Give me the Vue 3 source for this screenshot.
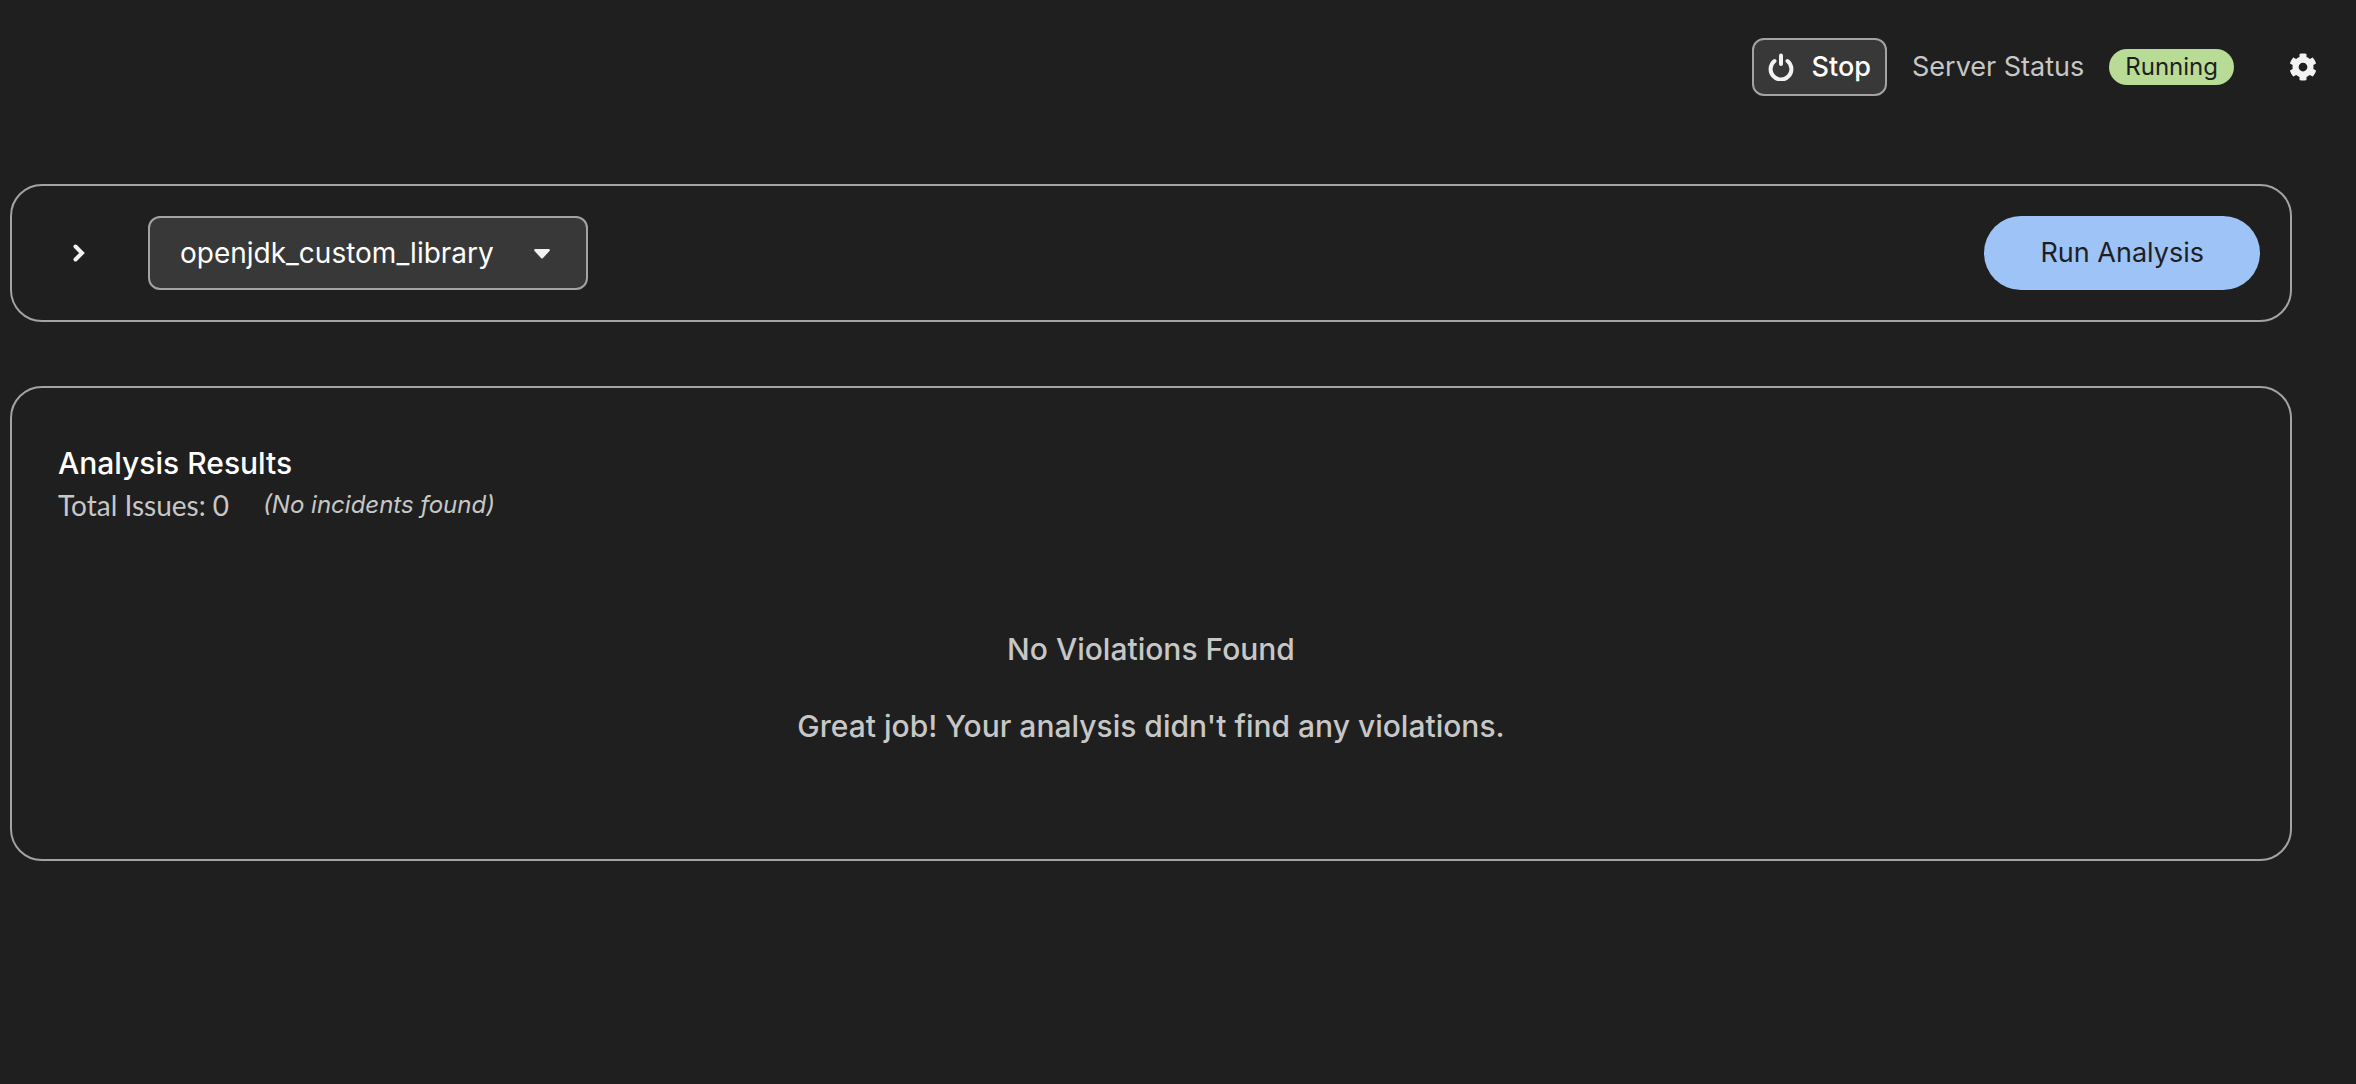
<script setup>
import { ref } from 'vue'

const profile = ref('openjdk_custom_library')
const profiles = ['openjdk_custom_library']
</script>

<template>
  <div class="page">
    <header class="toolbar">
      <button type="button" class="stop">
        <svg class="power" viewBox="0 0 26 28" aria-hidden="true">
          <path d="M6.500 8A10.400 10.400 0 1 0 19.500 8" />
          <path d="M13 2.500v8.500" />
        </svg>
        <span>Stop</span>
      </button>
      <span class="status-label">Server Status</span>
      <span class="badge">Running</span>
      <button type="button" class="icon-button settings" aria-label="Settings">
        <svg class="gear" viewBox="0 0 512 512" aria-hidden="true">
          <path d="M487.400 315.700l-42.600-24.600c4.300-23.200 4.300-47 0-70.200l42.600-24.600c4.900-2.800 7.100-8.600 5.500-14-11.100-35.600-30-67.800-54.700-94.600-3.800-4.100-10-5.100-14.800-2.300L380.800 110c-17.900-15.400-38.500-27.300-60.800-35.100V25.800c0-5.600-3.900-10.500-9.400-11.700-36.700-8.200-74.300-7.800-109.200 0-5.500 1.200-9.400 6.100-9.400 11.700V75c-22.200 7.900-42.800 19.800-60.800 35.100L88.700 85.500c-4.900-2.800-11-1.900-14.800 2.300-24.700 26.700-43.600 58.900-54.700 94.600-1.700 5.400.6 11.200 5.500 14L67.300 221c-4.300 23.200-4.300 47 0 70.200l-42.600 24.600c-4.900 2.800-7.100 8.600-5.500 14 11.100 35.600 30 67.800 54.700 94.600 3.800 4.100 10 5.100 14.800 2.300l42.600-24.600c17.900 15.400 38.500 27.300 60.800 35.100v49.200c0 5.600 3.900 10.500 9.400 11.700 36.700 8.200 74.300 7.800 109.200 0 5.500-1.200 9.400-6.100 9.400-11.700v-49.200c22.200-7.900 42.800-19.800 60.800-35.100l42.600 24.600c4.900 2.800 11 1.900 14.800-2.300 24.700-26.700 43.600-58.900 54.700-94.600 1.500-5.500-.7-11.300-5.600-14.100zM256 336c-44.100 0-80-35.900-80-80s35.900-80 80-80 80 35.900 80 80-35.900 80-80 80z" />
        </svg>
      </button>
    </header>

    <main class="content">
      <section class="card config">
        <button type="button" class="icon-button expand" aria-label="Show details">
          <svg class="chevron" viewBox="0 0 12 18" aria-hidden="true">
            <path d="M2.500 2.500L9 9l-6.500 6.500" />
          </svg>
        </button>
        <div class="profile">
          <select v-model="profile" aria-label="Profile">
            <option v-for="name in profiles" :key="name">{{ name }}</option>
          </select>
          <svg class="caret" viewBox="0 0 16 10" aria-hidden="true">
            <path d="M1 0h14q1.500.5.500 2L9 9q-1 1-2 0L.5 2q-1-1.500.5-2z" />
          </svg>
        </div>
        <button type="button" class="run">Run Analysis</button>
      </section>

      <section class="card results">
        <h2>Analysis Results</h2>
        <div class="summary">
          <span class="total">Total Issues: 0</span>
          <em>(No incidents found)</em>
        </div>
        <div class="empty">
          <h3>No Violations Found</h3>
          <p>Great job! Your analysis didn't find any violations.</p>
        </div>
      </section>
    </main>
  </div>
</template>

<style>
body {
  margin: 0;
  background: #1f1f1f;
}
</style>

<style scoped>
.page {
  font-family: Inter, "Liberation Sans", sans-serif;
  font-size: 27px;
  line-height: 42px;
  color: #c7c7c7;
}

button,
select {
  margin: 0;
  font: inherit;
  cursor: pointer;
}

.toolbar {
  display: flex;
  align-items: center;
  justify-content: flex-end;
  padding: 38px 39px 0 0;
}

.stop {
  display: flex;
  align-items: center;
  gap: 18px;
  box-sizing: border-box;
  height: 58px;
  padding: 0 14px;
  border: 2px solid #a3a3a3;
  border-radius: 12px;
  background: #383838;
  color: #fff;
  font-weight: 500;
}

.power {
  width: 26px;
  height: 28px;
  fill: none;
  stroke: #f2f2f2;
  stroke-width: 4;
  stroke-linecap: round;
}

.status-label {
  margin: 0 25px;
}

.badge {
  padding: 0 16px;
  border-radius: 18px;
  background: #b8dc96;
  color: #1f1f1f;
  font-size: 24px;
  line-height: 36px;
}

.icon-button {
  display: flex;
  padding: 0;
  border: 0;
  background: none;
}

.settings {
  margin-left: 55px;
}

.gear {
  width: 28px;
  height: 28px;
  fill: #f2f2f2;
}

.content {
  display: flex;
  flex-direction: column;
  gap: 64px;
  padding: 88px 64px 0 10px;
}

.card {
  border: 2px solid #a3a3a3;
  border-radius: 32px;
}

.config {
  display: flex;
  align-items: center;
  padding: 30px;
}

.expand {
  padding: 16px 32px 16px 31px;
}

.chevron {
  width: 12px;
  height: 18px;
  fill: none;
  stroke: #f2f2f2;
  stroke-width: 4;
  stroke-linecap: round;
}

.profile {
  position: relative;
  margin-left: 31px;
}

.profile select {
  appearance: none;
  display: block;
  width: 440px;
  height: 74px;
  padding: 0 80px 0 30px;
  border: 2px solid #a3a3a3;
  border-radius: 12px;
  background: #383838;
  color: #fff;
  font-size: 28px;
}

.caret {
  position: absolute;
  top: 33px;
  right: 38px;
  width: 16px;
  height: 10px;
  fill: #f2f2f2;
  pointer-events: none;
}

.run {
  height: 74px;
  margin-left: auto;
  padding: 0 56px;
  border: 0;
  border-radius: 37px;
  background: #9ec3f6;
  color: #1f1f1f;
}

.results {
  padding: 54px 46px 112px;
}

h2,
h3,
p {
  margin: 0;
}

h2,
h3 {
  font-size: 30px;
  font-weight: 500;
}

h2 {
  color: #fff;
}

.summary {
  display: flex;
  align-items: center;
  gap: 34px;
}

.total {
  font-family: Lato, Inter, sans-serif;
  font-size: 28px;
}

.summary em {
  font-size: 24px;
}

.empty {
  display: flex;
  flex-direction: column;
  align-items: center;
  gap: 35px;
  padding-top: 102px;
}

.empty p {
  font-size: 30px;
  font-weight: 500;
}
</style>
